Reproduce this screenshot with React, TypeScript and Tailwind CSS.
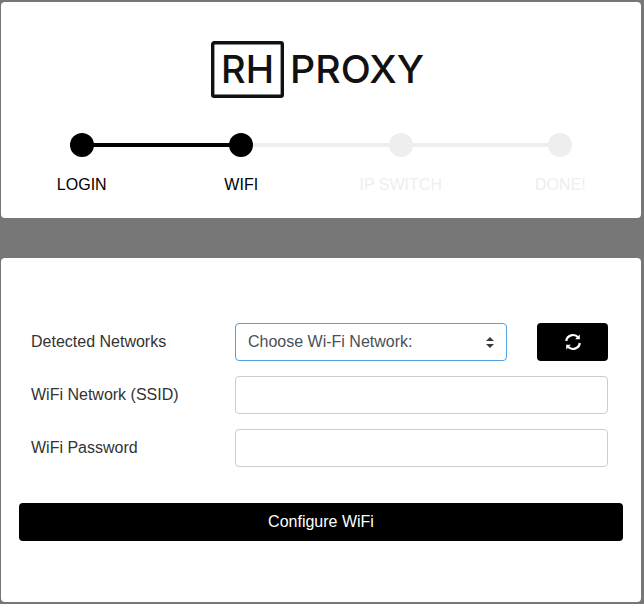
import React from "react";

const steps = [
  { label: "LOGIN", on: true },
  { label: "WIFI", on: true },
  { label: "IP SWITCH", on: false },
  { label: "DONE!", on: false },
];

function Logo() {
  return (
    <svg width="214" height="60" viewBox="0 0 214 60" aria-label="RH PROXY">
      <rect x="1.7" y="2.7" width="69.6" height="53.6" rx="1.5" fill="none" stroke="#111" strokeWidth="3.4" />
      <text x="10" y="43" textLength="53" lengthAdjust="spacingAndGlyphs" fontFamily="Inter, sans-serif" fontSize="38.5" fill="#111" fontWeight="500">RH</text>
      <text x="79" y="43" textLength="134" lengthAdjust="spacingAndGlyphs" fontFamily="Inter, sans-serif" fontSize="38.5" fill="#111" fontWeight="500">PROXY</text>
    </svg>
  );
}

function Stepper() {
  return (
    <div className="grid grid-cols-4 mx-[1px]">
      {steps.map((s, i) => (
        <div key={s.label} className="flex flex-col items-center">
          <div className="relative h-6 w-full flex justify-center">
            {i > 0 && (
              <div className={`absolute left-0 right-1/2 top-[10px] h-1 ${s.on ? "bg-black" : "bg-[#eeeeee]"}`} />
            )}
            {i < 3 && (
              <div className={`absolute left-1/2 right-0 top-[10px] h-1 ${steps[i + 1].on ? "bg-black" : "bg-[#eeeeee]"}`} />
            )}
            <div className={`relative w-6 h-6 rounded-full ${s.on ? "bg-black" : "bg-[#eeeeee]"}`} />
          </div>
          <div className={`mt-4 text-base leading-6 ${s.on ? "text-black" : "text-[#eeeeee]"}`}>{s.label}</div>
        </div>
      ))}
    </div>
  );
}

function Row({ label, children }: { label: string; children: React.ReactNode }) {
  return (
    <div className="flex items-center h-[38px]">
      <div className="w-[204px] text-base text-[#333333]">{label}</div>
      {children}
    </div>
  );
}

export default function App() {
  return (
    <div className="w-[644px] h-[604px] bg-[#777777] pt-[2px] pl-[1px] pr-[3px] pb-[2px] flex flex-col gap-10 font-['Liberation_Sans',Arial,sans-serif]">
      <div className="h-[216px] bg-white rounded-[4px] pt-[38px] flex flex-col">
        <div className="flex justify-start pl-[210px] h-[93px]">
          <Logo />
        </div>
        <Stepper />
      </div>
      <div className="flex-1 bg-white rounded-[4px] px-[18px] pt-[65px]">
        <div className="pl-[12px] pr-[15px] flex flex-col gap-[15px]">
          <Row label="Detected Networks">
            <div className="relative w-[272px] h-[38px] border border-[#4ea1e6] rounded-[4px] flex items-center pl-3 text-base text-[#495057]">
              Choose Wi-Fi Network:
              <svg className="absolute right-[12px] top-[13px]" width="8" height="11" viewBox="0 0 8 11">
                <path d="M4 0L8 4H0zM4 11L0 7h8z" fill="#343a40" />
              </svg>
            </div>
            <button className="ml-[30px] w-[71px] h-[38px] bg-black rounded-[4px] flex items-center justify-center">
              <svg width="18" height="18" viewBox="0 0 18 18" fill="none" stroke="#fff" strokeWidth="2.2">
                <path d="M2.2 8a6.9 6.9 0 0 1 12-3.6" />
                <path d="M15.8 10a6.9 6.9 0 0 1-12 3.6" />
                <path d="M15.8 1.6v4.6h-4.6z" fill="#fff" stroke="none" />
                <path d="M2.2 16.4v-4.6h4.6z" fill="#fff" stroke="none" />
              </svg>
            </button>
          </Row>
          <Row label="WiFi Network (SSID)">
            <div className="w-[373px] h-[38px] border border-[#cccccc] rounded-[4px]" />
          </Row>
          <Row label="WiFi Password">
            <div className="w-[373px] h-[38px] border border-[#cccccc] rounded-[4px]" />
          </Row>
        </div>
        <button className="mt-[36px] w-[604px] h-[38px] bg-black rounded-[4px] text-white text-base">Configure WiFi</button>
      </div>
    </div>
  );
}
